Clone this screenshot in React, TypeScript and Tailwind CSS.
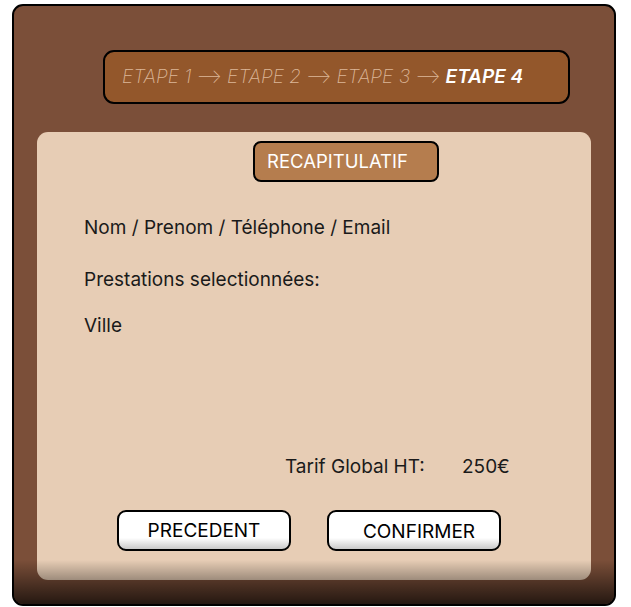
export default function App() {
  return (
    <div className="h-[607px] w-[631px] overflow-hidden bg-white font-['Inter',sans-serif] text-[#1a1a1a]">
      <div className="relative ml-[12px] mt-[4px] flex h-[602px] w-[604px] flex-col overflow-hidden rounded-[11px] border-2 border-black bg-[#7b4f39] px-[23px] pt-[44px]">
        <StepBar />

        <div className="mt-[28px] flex h-[448px] w-[554px] flex-col rounded-[11px] bg-[#e7cdb5]">
          <div className="ml-[216px] mt-[9px] flex h-[41px] w-[186px] items-center rounded-[8px] border-2 border-black bg-[#b57d4e] pb-[2px] pl-3 text-[18.5px] leading-6 text-white">
            RECAPITULATIF
          </div>

          <div className="ml-[47px] mt-[34px] flex flex-col text-[19px] leading-6">
            <p>Nom / Prenom / Téléphone / Email</p>
            <p className="mt-[28px]">Prestations selectionnées:</p>
            <p className="mt-[22px]">Ville</p>
          </div>

          <div className="ml-[248px] mt-[117px] flex text-[19px] leading-6">
            <span className="w-[177px]">Tarif Global HT:</span>
            <span>250€</span>
          </div>

          <div className="ml-[80px] mt-[31px] flex gap-[36px]">
            <ActionButton label="PRECEDENT" />
            <ActionButton label="CONFIRMER" className="pl-[10px] pt-[3px]" />
          </div>
        </div>

        {/* dark fade along the bottom edge */}
        <div className="pointer-events-none absolute inset-x-0 bottom-0 h-[44px] bg-gradient-to-b from-transparent via-black/35 to-black/70" />
      </div>
    </div>
  );
}

function StepBar() {
  const steps = ["ETAPE 1", "ETAPE 2", "ETAPE 3"];
  return (
    <div className="ml-[66px] flex h-[54px] w-[467px] items-center rounded-[11px] border-2 border-black bg-[#93572b] pb-[1px] pl-[17px] text-[19px] italic leading-6">
      {steps.map((s) => (
        <span key={s} className="flex items-center font-extralight text-[#dcb697]">
          {s}
          <span className="mx-[5px] not-italic">⟶</span>
        </span>
      ))}
      <span className="font-semibold text-white">ETAPE 4</span>
    </div>
  );
}

function ActionButton({
  label,
  className = "",
}: {
  label: string;
  className?: string;
}) {
  return (
    <button
      className={
        "flex h-[41px] w-[174px] items-center justify-center rounded-[9px] border-2 border-black bg-gradient-to-b from-white via-white via-70% to-[#c9c9c9] text-[19px] leading-6 text-black " +
        className
      }
    >
      {label}
    </button>
  );
}
